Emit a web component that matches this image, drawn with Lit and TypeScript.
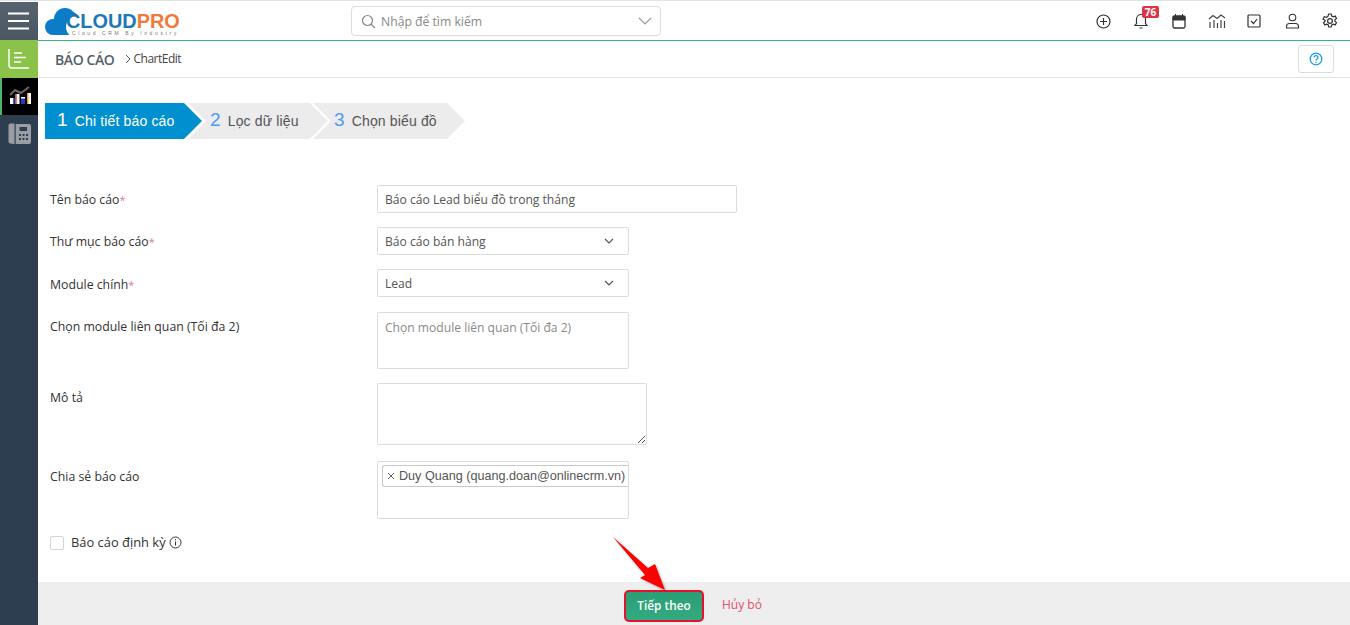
import { LitElement, html, css } from "lit";
import { customElement } from "lit/decorators.js";

const chevron = html`<svg class="chev" width="12" height="12" viewBox="0 0 12 12"><path d="M2 4l4 4 4-4" fill="none" stroke="#555" stroke-width="1.2"/></svg>`;

@customElement("app-root")
export class AppRoot extends LitElement {
  static styles = css`
    :host { display: block; width: 1350px; height: 625px; overflow: hidden; background: #fff; font-family: "Open Sans", sans-serif; font-size: 12px; color: #444; position: relative; }
    * { box-sizing: border-box; }
    .page { display: grid; grid-template-columns: 38px 1fr; height: 625px; border-top: 1px solid #e3e3e3; padding-top: 1px; }
    .side { background: #2d3e50; display: flex; flex-direction: column; }
    .side > div { display: flex; align-items: center; justify-content: center; }
    .s-menu { height: 38px; background: linear-gradient(#56626d, #4b5763); }
    .s-green { height: 38px; background: #8bc34a; }
    .s-black { height: 37px; background: #000; border-left: 2px solid #4fb56d; }
    .s-phone { height: 36px; }
    .main { display: flex; flex-direction: column; min-width: 0; }
    .top { height: 39px; flex: none; border-bottom: 1px solid #36b37e; display: flex; align-items: center; position: relative; padding-left: 7px; }
    .logo { width: 306px; height: 38px; position: relative; flex: none; }
    .cloud { position: absolute; left: 0; top: 3px; }
    .logo-text { position: absolute; left: 21px; top: 8px; font-family: "Liberation Sans", sans-serif; font-weight: 700; font-size: 19.9px; line-height: 22px; color: #1b78b8; white-space: nowrap; }
    .logo-text b { color: #f07a3a; }
    .logo-sub { position: absolute; left: 27px; top: 28px; font-family: "Liberation Sans", sans-serif; font-size: 5px; line-height: 6px; letter-spacing: 2.6px; color: #777; white-space: nowrap; }
    .search { width: 310px; height: 30px; border: 1px solid #dcdcdc; border-radius: 4px; display: flex; align-items: center; padding: 0 8px 0 9px; color: #888; font-size: 12.2px; gap: 5px; }
    .search span { flex: 1; }
    .icons { margin-left: auto; display: flex; align-items: center; gap: 15.8px; padding-right: 9px; }
    .icons svg { display: block; }
    .ico { width: 22px; height: 22px; display: flex; align-items: center; justify-content: center; position: relative; }
    .badge { position: absolute; left: 12px; top: -4px; background: #dc3545; color: #fff; font: 700 10px/12px "Open Sans", sans-serif; height: 12px; width: 17px; text-align: center; border-radius: 2px; }
    .crumb { height: 37px; flex: none; border-bottom: 1px solid #e3e3e3; display: flex; align-items: center; padding: 0 16px 0 17px; }
    .crumb b { font-weight: 600; font-size: 14px; color: #555f69; letter-spacing: -0.4px; }
    .crumb .sep { margin-left: 9px; display: flex; }
    .crumb .ce { font-size: 12px; margin-left: 2px; letter-spacing: -0.5px; color: #444; margin-top: -1px; }
    .help { margin-left: auto; width: 36px; height: 28px; border: 1px solid #d8dde2; border-radius: 3px; display: flex; align-items: center; justify-content: center; }
    .content { flex: 1; padding: 25px 0 0 7px; min-height: 0; }
    .steps { display: flex; font-family: "Liberation Sans", sans-serif; height: 36px; }
    .step { height: 36px; display: flex; align-items: center; background: #ececec; color: #555; font-size: 14px; letter-spacing: 0.15px; clip-path: polygon(0 0, calc(100% - 18px) 0, 100% 50%, calc(100% - 18px) 100%, 0 100%, 18px 50%); }
    .step i { font-style: normal; font-size: 19px; color: #4f9bf0; margin-right: 8px; margin-top: -2px; }
    .step.one { width: 157px; background: #0090d0; color: #fff; padding-left: 12px; clip-path: polygon(0 0, calc(100% - 18px) 0, 100% 50%, calc(100% - 18px) 100%, 0 100%); }
    .step.one i { color: #fff; margin-right: 7px; }
    .step.two { width: 140px; margin-left: -14px; padding-left: 22px; }
    .step.two i { margin-right: 7px; }
    .step.three { width: 152px; margin-left: -15px; padding-left: 21px; }
    .step.three i { margin-right: 7px; }
    form { margin-top: 46px; display: flex; flex-direction: column; gap: 14px; padding-left: 5px; }
    .row { display: grid; grid-template-columns: 327px auto; align-items: start; }
    .row.gap1 { margin-top: 1px; }
    .row.gap2 { margin-top: 2px; }
    label { color: #333; font-size: 12.3px; font-weight: 500; padding-top: 6px; line-height: 18px; }
    label.mod { padding-top: 7px; }
    label em { color: #e8769a; font-style: normal; font-size: 11px; }
    .f { border: 1px solid #dcdcdc; border-radius: 2px; background: #fff; font-size: 12.1px; color: #555; padding: 0 7px; display: flex; align-items: center; }
    .w360 { width: 360px; height: 28px; }
    .w252 { width: 252px; height: 28px; justify-content: space-between; padding-right: 13px; }
    .multi { width: 252px; height: 57px; align-items: flex-start; padding-top: 6px; color: #8a8a8a; }
    .area { width: 270px; height: 62px; position: relative; }
    .grip { position: absolute; right: 0; bottom: 0; }
    .share { width: 252px; height: 58px; padding: 3px 0 0 4px; align-items: flex-start; }
    .tag { font-family: "Liberation Sans", sans-serif; font-size: 12.6px; line-height: 20px; height: 22px; border: 1px solid #c8c8c8; border-right: 0; border-radius: 3px 0 0 3px; color: #555; white-space: nowrap; padding-left: 4px; display: flex; align-items: center; gap: 4px; flex: none; width: 246px; }
    .tag svg { flex: none; }
    .chk { display: flex; align-items: center; margin-top: 2px; height: 16px; }
    .box { width: 14px; height: 14px; border: 1px solid #d5d5d5; border-radius: 2px; margin-right: 7px; }
    .chk span { font-size: 12.9px; font-weight: 500; color: #333; margin: -2px 3px 0 0; }
    .chk svg { margin-top: -2px; }
    .foot { height: 43px; flex: none; background: #eeeeee; display: flex; align-items: center; padding: 5px 0 0 586px; gap: 18px; }
    .next { width: 80px; height: 32px; background: linear-gradient(#2a9f76, #33aa80); color: #fff; border: 2px solid #e8112d; border-radius: 5px; font: 600 11.8px "Open Sans", sans-serif; display: flex; align-items: center; justify-content: center; padding-bottom: 2px; }
    .cancel { color: #e0506e; font-size: 12px; margin-top: -3px; }
    .arrow { position: absolute; left: 610px; top: 532px; }
    .arrow path { filter: drop-shadow(1px 1px 1px #0005); }
  `;

  render() {
    return html`<div class="page">
      <aside class="side">
        <div class="s-menu"><svg width="24" height="20" viewBox="0 0 24 20"><path d="M1 2.5h21M1 10h21M1 17.5h21" stroke="#fff" stroke-width="2.2"/></svg></div>
        <div class="s-green"><svg width="24" height="24" viewBox="0 0 24 24" fill="none" stroke="#fff" stroke-width="1.4"><path d="M2 2v16q0 3 3 3h17M7 6h8M7 10.5h12M7 15h7"/></svg></div>
        <div class="s-black"><svg width="24" height="24" viewBox="0 0 24 24"><path d="M2 10l5-5 6 3 8-6" fill="none" stroke="#666" stroke-width="2"/><rect x="2" y="13" width="4" height="6" fill="#fff"/><rect x="5" y="13" width="1.500" height="6" fill="#1e6fe0"/><rect x="7.500" y="9" width="4" height="10" fill="#fff"/><rect x="7.500" y="9" width="1.200" height="10" fill="#e33"/><rect x="13" y="12" width="4" height="7" fill="#2038c8"/><rect x="13" y="12" width="4" height="1.500" fill="#fff"/><rect x="19" y="8" width="4" height="11" fill="#fff"/><rect x="19" y="8" width="1.500" height="11" fill="#f59a1e"/></svg></div>
        <div class="s-phone"><svg width="23" height="21" viewBox="0 0 23 21"><rect x="0.500" y="0.500" width="7" height="20" rx="2" fill="#9a9ea3"/><rect x="3" y="1" width="20" height="20" rx="2" fill="#9a9ea3"/><rect x="6.500" y="1" width="1.200" height="20" fill="#2d3e50"/><rect x="11.500" y="4" width="7.500" height="4" fill="#2d3e50"/><path d="M11 11h2v2h-2zM14.500 11h2v2h-2zM18 11h2v2h-2zM11 15h2v2h-2zM14.500 15h2v2h-2zM18 15h2v2h-2z" fill="#2d3e50"/></svg></div>
      </aside>
      <div class="main">
        <header class="top">
          <div class="logo">
            <svg class="cloud" width="36" height="32" viewBox="0 0 36 32"><g fill="#0b7cc7"><circle cx="8" cy="22" r="8"/><circle cx="20" cy="14" r="11"/><circle cx="27" cy="13" r="6"/><rect x="8" y="18" width="20" height="12"/></g><circle cx="32" cy="22" r="11" fill="#fff"/></svg>
            <span class="logo-text">CLOUD<b>PRO</b></span>
            <span class="logo-sub">Cloud CRM By Industry</span>
          </div>
          <div class="search">
            <svg width="15" height="15" viewBox="0 0 15 15" fill="none" stroke="#888" stroke-width="1.200"><circle cx="6.500" cy="6.500" r="5"/><path d="M10 10l4 4"/></svg>
            <span>Nhập để tìm kiếm</span>
            <svg width="14" height="10" viewBox="0 0 14 10" fill="none" stroke="#999" stroke-width="1.100"><path d="M1 2l6 6 6-6"/></svg>
          </div>
          <div class="icons">
            <div class="ico"><svg width="15" height="15" viewBox="0 0 15 15" fill="none" stroke="#333" stroke-width="1.200"><circle cx="7.500" cy="7.500" r="6.500"/><path d="M7.500 4v7M4 7.500h7"/></svg></div>
            <div class="ico"><svg width="14" height="16" viewBox="0 0 14 16" fill="none" stroke="#333" stroke-width="1.200"><path d="M1 12.500h12l-1.500-2V6a4.500 4.500 0 0 0-9 0v4.500zM5.500 15h3"/></svg><span class="badge">76</span></div>
            <div class="ico"><svg width="14" height="15" viewBox="0 0 14 15"><rect x="1" y="2" width="12" height="12" rx="1.500" fill="none" stroke="#333" stroke-width="1.300"/><path d="M1 2.500h12V6H1zM3.500 0v3M10.500 0v3" fill="#333" stroke="#333"/></svg></div>
            <div class="ico"><svg width="18" height="16" viewBox="0 0 18 16" fill="none" stroke="#444" stroke-width="1.200"><path d="M1 6l4-3.500 4 3 4-3.500 4 3M2 9v6M6 7v8M9.500 10v5M13 7v8M16.500 8v7"/></svg></div>
            <div class="ico"><svg width="14" height="14" viewBox="0 0 14 14" fill="none" stroke="#333" stroke-width="1.200"><rect x="1" y="1" width="12" height="12" rx="1"/><path d="M4 7l2.500 2.500L10 5"/></svg></div>
            <div class="ico"><svg width="15" height="16" viewBox="0 0 15 16" fill="none" stroke="#333" stroke-width="1.100"><circle cx="7.500" cy="4.500" r="3.300"/><path d="M1.500 15v-1.500c0-2 1.500-3 3-3h6c1.500 0 3 1 3 3V15z"/></svg></div>
            <div class="ico"><svg width="16" height="16" viewBox="0 0 16 16" fill="none" stroke="#333" stroke-width="1.200"><path d="M6.700 1h2.600l.4 2 1.500.8 2-.7 1.300 2.300-1.600 1.300v1.600l1.600 1.300-1.300 2.300-2-.7-1.500.8-.4 2H6.700l-.4-2-1.500-.8-2 .7-1.300-2.300 1.600-1.300V7.300L1 6l1.300-2.300 2 .7 1.500-.8z"/><circle cx="8" cy="8" r="2.400"/></svg></div>
          </div>
        </header>
        <div class="crumb">
          <b>BÁO CÁO</b>
          <span class="sep"><svg width="8" height="10" viewBox="0 0 8 10" fill="none" stroke="#555"><path d="M2 1l4 4-4 4"/></svg></span>
          <span class="ce">ChartEdit</span>
          <div class="help"><svg width="14" height="14" viewBox="0 0 14 14" fill="none" stroke="#1a9be0" stroke-width="1.300"><circle cx="7" cy="7" r="5.800"/><path d="M5 5.500c0-2.500 4-2.500 4 0 0 1.500-2 1.500-2 3M7 9.700v1.200"/></svg></div>
        </div>
        <div class="content">
          <div class="steps">
            <div class="step one"><i>1</i>Chi tiết báo cáo</div>
            <div class="step two"><i>2</i>Lọc dữ liệu</div>
            <div class="step three"><i>3</i>Chọn biểu đồ</div>
          </div>
          <form>
            <div class="row"><label>Tên báo cáo<em>*</em></label><div class="f w360">Báo cáo Lead biểu đồ trong tháng</div></div>
            <div class="row"><label>Thư mục báo cáo<em>*</em></label><div class="f w252">Báo cáo bán hàng ${chevron}</div></div>
            <div class="row"><label class="mod">Module chính<em>*</em></label><div class="f w252">Lead ${chevron}</div></div>
            <div class="row gap1"><label>Chọn module liên quan (Tối đa 2)</label><div class="f multi">Chọn module liên quan (Tối đa 2)</div></div>
            <div class="row"><label>Mô tả</label><div class="f area"><svg class="grip" width="10" height="10" viewBox="0 0 10 10" stroke="#555"><path d="M9 2l-7 7M9 6L6 9"/></svg></div></div>
            <div class="row gap2"><label class="mod">Chia sẻ báo cáo</label><div class="f share"><div class="tag"><svg width="8" height="8" viewBox="0 0 8 8" stroke="#666"><path d="M1 1l6 6M7 1L1 7"/></svg>Duy Quang (quang.doan@onlinecrm.vn)</div></div></div>
            <div class="chk"><div class="box"></div><span>Báo cáo định kỳ</span><svg width="13" height="13" viewBox="0 0 13 13" fill="none" stroke="#333"><circle cx="6.500" cy="6.500" r="5.500"/><path d="M6.500 5.500v4M6.500 3.200v1.200"/></svg></div>
          </form>
        </div>
        <footer class="foot"><div class="next">Tiếp theo</div><span class="cancel">Hủy bỏ</span></footer>
      </div>
      <svg class="arrow" width="60" height="62" viewBox="0 0 60 62"><path d="M3 5L38 36l7-4 10 26-25-12 5-3z" fill="#f00"/></svg>
    </div>`;
  }
}
